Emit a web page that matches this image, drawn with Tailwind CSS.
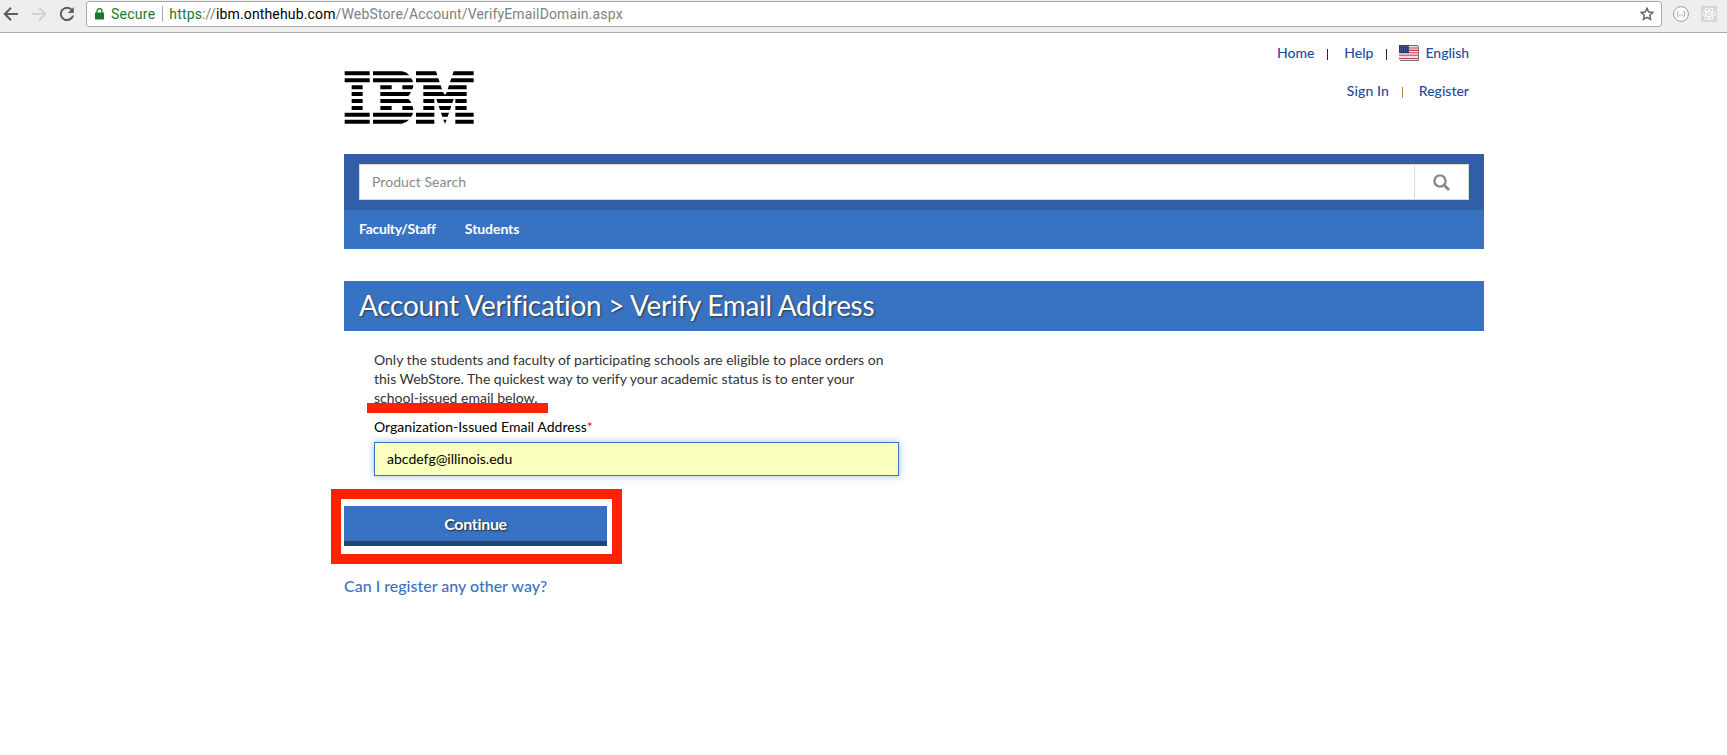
<!DOCTYPE html>
<html lang="en">
<head>
<meta charset="utf-8">
<title>Account Verification</title>
<script src="https://cdn.jsdelivr.net/npm/@tailwindcss/browser@4"></script>
</head>
<body class="w-[1727px] h-[755px] overflow-hidden bg-white font-['Lato',sans-serif] text-[14px] text-black [font-variant-ligatures:none]">
<header class="h-[33px] bg-[#eeeeee] border-b border-[#a9a9a9] flex items-start font-['Roboto',sans-serif]">
  <div class="w-[86px] h-[28px] flex items-center pl-[3px] gap-[12px]">
    <svg class="w-[16px] h-[16px]" viewBox="0 0 16 16" fill="none" stroke="#5a5d61" stroke-width="2"><path d="M15 8H2M8 1.8 1.8 8 8 14.2"/></svg>
    <svg class="w-[16px] h-[16px]" viewBox="0 0 16 16" fill="none" stroke="#d2d2d2" stroke-width="2"><path d="M1 8h13M8 1.8 14.2 8 8 14.2"/></svg>
    <svg class="w-[16px] h-[16px]" viewBox="0 0 16 16"><path d="M13 4.200A6.200 6.200 0 1 0 14 9.400" fill="none" stroke="#5a5d61" stroke-width="2"/><path d="M14.800 1v6H8.800z" fill="#5a5d61"/></svg>
  </div>
  <div class="mt-px w-[1576px] h-[26px] bg-white border border-[#a9a9a9] rounded-[3px] flex items-center pl-[8px] pr-[7px]">
    <svg class="w-[9px] h-[12px] mb-[1px]" viewBox="0 0 9 12"><path d="M2 5V3.200a2.500 2.500 0 0 1 5 0V5" fill="none" stroke="#17782f" stroke-width="1.300"/><rect y="4.600" width="9" height="6.800" rx=".6" fill="#17782f"/></svg>
    <span class="ml-[7px] text-[14px] tracking-[0.25px] text-[#17782f]">Secure</span>
    <span class="ml-[7px] w-px h-[16px] bg-[#a9a9a9]"></span>
    <span class="ml-[6px] text-[14px] tracking-[0.15px] text-[#808080]"><span class="text-[#17782f]">https</span>://<span class="text-black">ibm.onthehub.com</span>/WebStore/Account/VerifyEmailDomain.aspx</span>
    <svg class="ml-auto w-[14px] h-[14px]" viewBox="0 0 14 14" fill="none" stroke="#5a5d61" stroke-width="1.400"><path d="m7 1.200 1.700 3.800 4.200.4-3.200 2.800.9 4.200L7 10.300l-3.600 2.100.9-4.200-3.200-2.800 4.200-.4z"/></svg>
  </div>
  <svg class="ml-[11px] mt-[6px] w-[16px] h-[16px]" viewBox="0 0 16 16" fill="none" stroke="#999" stroke-width="1"><circle cx="8" cy="8" r="7.400" fill="#fff"/><path d="M5.500 5c-1.500 0-.4 2.500-1.800 3 1.400.5.3 3 1.800 3M10.500 5c1.500 0 .4 2.500 1.800 3-1.400.5-.3 3-1.800 3"/><path d="M6 9h4" stroke-dasharray="1 .5"/></svg>
  <svg class="ml-[12px] mt-[6px] w-[16px] h-[16px]" viewBox="0 0 16 16" fill="none" stroke="#fff" stroke-width=".9"><path fill="#d6d6d6" stroke="none" d="M0 0h16v16H0z"/><ellipse cx="8" cy="8" rx="6.500" ry="2.500"/><ellipse cx="8" cy="8" rx="6.500" ry="2.500" transform="rotate(60 8 8)"/><ellipse cx="8" cy="8" rx="6.500" ry="2.500" transform="rotate(120 8 8)"/><circle cx="8" cy="8" r="1" fill="#fff" stroke="none"/></svg>
</header>
<main class="ml-[344px] w-[1140px]">
  <div class="h-[121px] flex justify-between">
    <svg class="mt-[38px] w-[131px] h-[53px]" viewBox="42 32 393 159"><path d="M44 33h75v12H44zM44 54h75v12H44zM65 75h33v12H65zM65 95h33v12H65zM65 116h33v12H65zM65 137h33v12H65zM44 157h75v12H44zM44 178h75v12H44z
    M129 33h87q14 2 22 12H129zM129 54h114q5 5 6 12H129zM151 75h34v12h-34zM217 75h33q0 7-3 12h-30zM151 95h92q-3 7-8 12h-84zM151 116h84q6 5 9 12h-93zM151 137h34v12h-34zM217 137h30q3 6 3 12h-33zM129 157h120q-1 7-6 12H129zM129 178h108q-8 10-22 12h-86z
    M258 33h60l4 12h-64zM371 33h60v12h-64zM258 54h67l4 12h-71zM364 54h67v12h-71zM280 75h52l4 12h-56zM357 75h53v12h-57zM280 95h59l6 9 6-9h59v12H280zM280 116h33v12h-33zM319 116h52l-4 12h-44zM376 116h34v12h-34zM280 137h33v12h-33zM326 137h38l-4 12h-30zM376 137h34v12h-34zM258 157h55v12h-55zM333 157h24l-4 12h-16zM376 157h55v12h-55zM258 178h55v12h-55zM340 178h10l-5 12zM376 178h55v12h-55z"/></svg>
    <div class="mr-[15px] flex flex-col items-end text-[#1f4b9e] font-medium">
      <div class="mt-[9px] h-[20px] flex items-center">
        <span class="tracking-[-0.05px]">Home</span><span class="mx-[13px] w-px h-[11px] bg-[#302040] mt-[4px]"></span><span class="ml-[3px]">Help</span><span class="mx-[12px] w-px h-[11px] bg-[#302040] mt-[4px]"></span>
        <svg class="w-[19px] h-[15px] mr-[8px] mt-px drop-shadow-[1px_1px_0_#777]" viewBox="0 0 19 15"><path fill="#f5dede" d="M0 0h19v15H0z"/><path d="M0 .5h19M0 3h19M0 5.400h19M0 7.800h19M0 10.200h19M0 13.500h19" stroke="#c8434c" stroke-width="1.100"/><path fill="#2d3c70" d="M0 0h10v8H0z"/><path d="M1 1.500h9M1 3.500h9M1 5.500h9" stroke="#6c79a5" stroke-width=".7" stroke-dasharray="1 1"/></svg>
        <span class="tracking-[-0.03px]">English</span>
      </div>
      <div class="mt-[18px] h-[20px] flex items-center">
        <span class="tracking-[0.09px]">Sign In</span><span class="mx-[13px] w-px h-[11px] bg-[#b8863a] mt-[4px]"></span><span class="ml-[3px]">Register</span>
      </div>
    </div>
  </div>
  <div class="h-[56px] bg-[#305fa6] px-[15px] pt-[10px]">
    <div class="h-[36px] bg-white border border-[#d8d8d8] flex">
      <div class="flex-1 pl-[12px] pb-[2px] flex items-center text-[#888] tracking-[0.06px]">Product Search</div>
      <div class="w-[54px] border-l border-[#d8d8d8] flex items-center justify-center">
        <svg class="w-[17px] h-[17px]" viewBox="0 0 17 17" fill="none" stroke="#888"><circle cx="7" cy="7" r="5.600" stroke-width="2.400"/><path d="m11 11 5 5" stroke-width="2.800"/></svg>
      </div>
    </div>
  </div>
  <nav class="h-[39px] bg-[#3873c3] pl-[15px] pb-[2px] flex items-center gap-[29px] text-white font-bold"><span class="tracking-[-0.27px]">Faculty/Staff</span><span class="tracking-[-0.07px]">Students</span></nav>
  <div class="mt-[32px] h-[50px] bg-[#3873c3] pl-[15px] pb-[3px] flex items-center text-white text-[28px] tracking-[-0.3px] [text-shadow:1px_1px_2px_#333]"><h1>Account Verification &gt; Verify Email Address</h1></div>
  <div class="ml-[30px] mt-[19px] leading-[19px] text-[#333] whitespace-nowrap relative">
    <div class="tracking-[-0.005px]">Only the students and faculty of participating schools are eligible to place orders on</div>
    <div class="tracking-[-0.02px]">this WebStore. The quickest way to verify your academic status is to enter your</div>
    <div>school-issued email below.</div>
    <div class="absolute left-[-7px] top-[53px] w-[181px] h-[10px] bg-[#ff2200]"></div>
  </div>
  <div class="ml-[30px] mt-[10px] leading-[19px]"><span class="tracking-[0.03px]">Organization-Issued Email Address</span><span class="text-[#e8112d]">*</span></div>
  <div class="ml-[30px] mt-[6px] w-[525px] h-[34px] border border-[#3873c3] bg-[#faffbd] shadow-[0_0_7px_#3873c380] pl-[12px] pb-px flex items-center">abcdefg@illinois.edu</div>
  <div class="-ml-[13px] mt-[13px] w-[291px] h-[75px] border-[10px] border-[#ff2200] pl-[3px] pt-[7px]">
    <div class="w-[263px] h-[40px] bg-[#3873c3] border-b-[5px] border-[#234474] flex items-center justify-center text-white font-bold text-[16px] tracking-[-0.3px] [text-shadow:1px_1px_2px_#222]">Continue</div>
  </div>
  <div class="mt-[11px] text-[16px] leading-[22px] text-[#3873c3] font-medium">Can I register any other way?</div>
</main>
</body>
</html>
